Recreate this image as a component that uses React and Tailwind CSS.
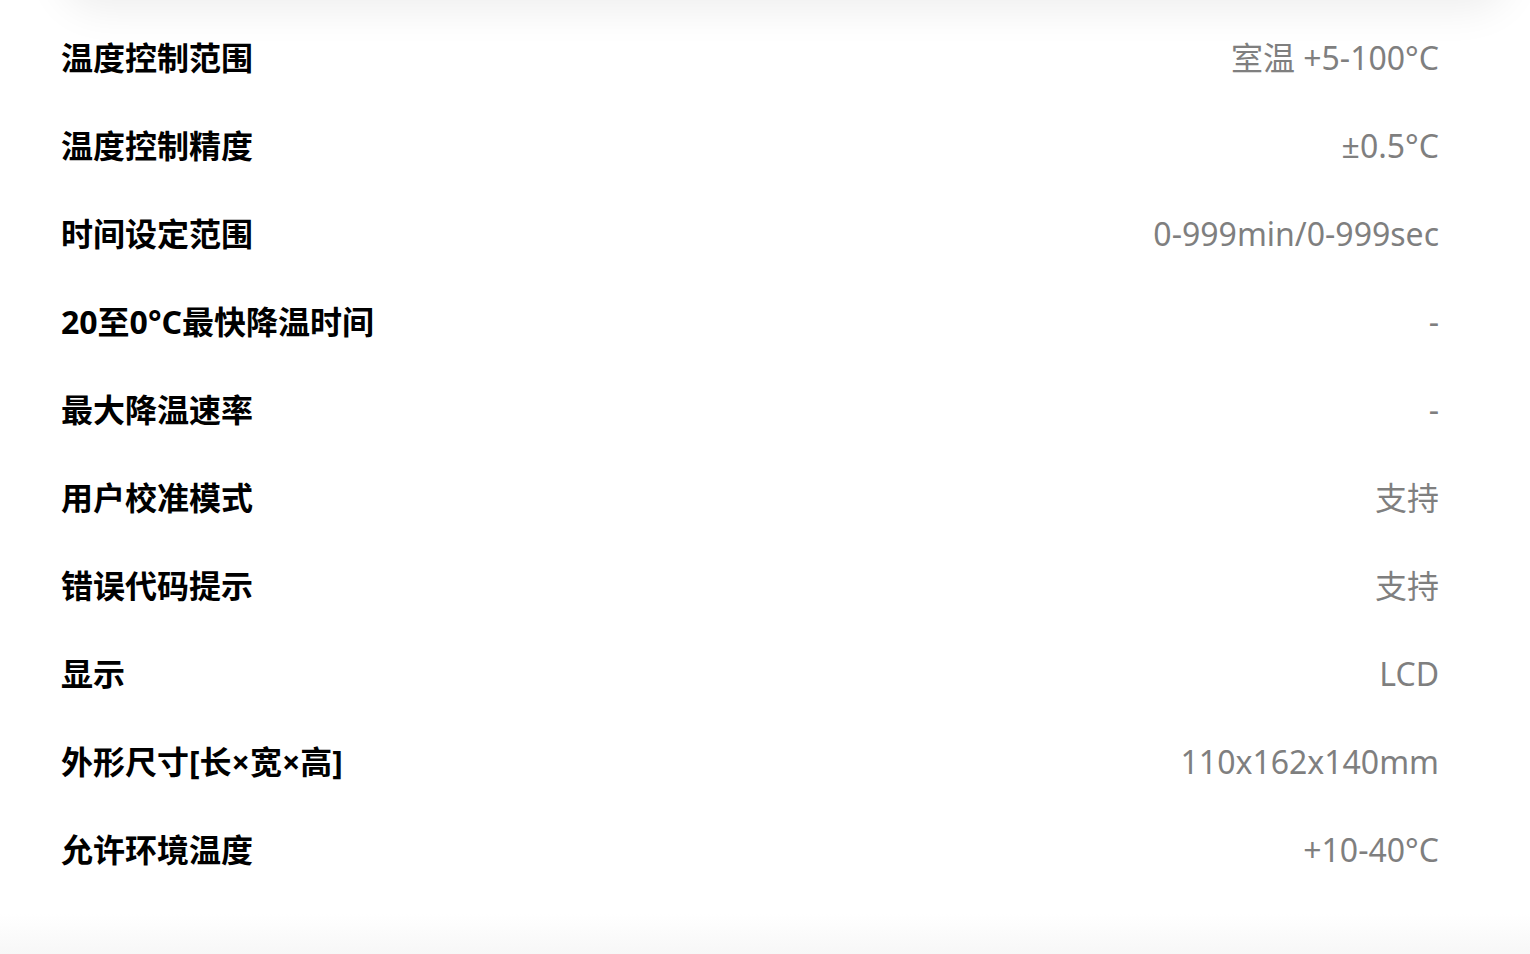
const specs = [
  { label: "温度控制范围", value: "室温 +5-100°C" },
  { label: "温度控制精度", value: "±0.5°C" },
  { label: "时间设定范围", value: "0-999min/0-999sec" },
  { label: "20至0°C最快降温时间", value: "-" },
  { label: "最大降温速率", value: "-" },
  { label: "用户校准模式", value: "支持" },
  { label: "错误代码提示", value: "支持" },
  { label: "显示", value: "LCD" },
  { label: "外形尺寸[长×宽×高]", value: "110x162x140mm" },
  { label: "允许环境温度", value: "+10-40°C" },
];

const SpecRow = ({ label, value }) => (
  <div className="flex items-center justify-between h-[88px]">
    <span className="text-[32px] font-bold text-black leading-none">{label}</span>
    <span className="text-[32px] text-[#7f7f7f] leading-none">{value}</span>
  </div>
);

const App = () => {
  return (
    <div
      className="relative w-full h-[954px] overflow-hidden bg-white"
      style={{ fontFamily: '"Noto Sans", "Noto Sans CJK SC", sans-serif' }}
    >
      {/* card above the fold, only its shadow shows */}
      <div className="absolute left-[60px] right-[20px] top-[-200px] h-[200px] rounded-[40px] bg-white shadow-[0_10px_40px_rgba(0,0,0,0.07)]" />

      <div className="relative flex flex-col pt-[14px] pl-[61px] pr-[91px]">
        {specs.map((s) => (
          <SpecRow key={s.label} label={s.label} value={s.value} />
        ))}
      </div>

      <div className="absolute left-0 right-0 bottom-0 h-[40px] bg-gradient-to-b from-white to-[#f7f7f7]" />
    </div>
  );
};

export default App;
